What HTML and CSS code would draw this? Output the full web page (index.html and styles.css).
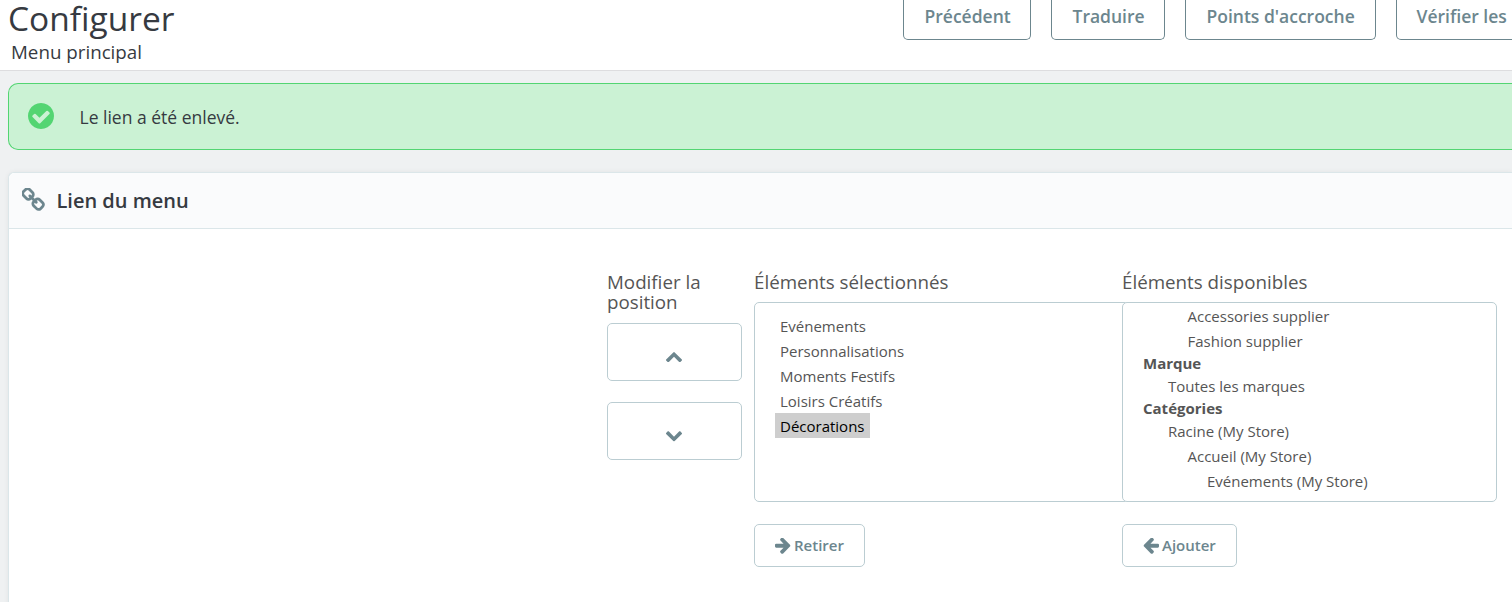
FILE: index.html
```
<!DOCTYPE html>
<html lang="fr">
<head>
    <meta charset="UTF-8">
    <meta name="viewport" content="width=device-width, initial-scale=1.0">
    <title>Configurer - Menu principal</title>
    <link rel="stylesheet" href="styles.css">
</head>
<body>
    <header class="page-head">
        <div class="page-titles">
            <h1 class="page-title">Configurer</h1>
            <div class="page-subtitle">Menu principal</div>
        </div>
        <div class="toolbar">
            <a class="toolbar-btn btn-back">Précédent</a>
            <a class="toolbar-btn btn-translate">Traduire</a>
            <a class="toolbar-btn btn-hooks">Points d'accroche</a>
            <a class="toolbar-btn btn-check">Vérifier les</a>
        </div>
    </header>

    <main class="content">
        <div class="alert-success">
            <svg class="alert-icon" viewBox="128 128 1536 1536"><path d="M1412 734q0-28-18-46l-91-90q-19-19-45-19t-45 19l-408 407-226-226q-19-19-45-19t-45 19l-91 90q-18 18-18 46 0 27 18 45l362 362q19 19 45 19 27 0 46-19l543-543q18-18 18-45zm252 162q0 209-103 385.500t-279.500 279.500-385.500 103-385.500-103-279.500-279.500-103-385.500 103-385.500 279.500-279.500 385.500-103 385.500 103 279.500 279.500 103 385.500z"/></svg>
            <span>Le lien a été enlevé.</span>
        </div>

        <section class="panel">
            <div class="panel-heading">
                <svg class="link-icon" viewBox="64 64 1664 1664"><path d="M1456 1216q0-40-28-68l-208-208q-28-28-68-28-42 0-72 32 3 3 19 18.500t21.500 21.500 15 19 13 25.500 3.500 27.500q0 40-28 68t-68 28q-15 0-27.500-3.500t-25.500-13-19-15-21.500-21.500-18.500-19q-33 31-33 73 0 40 28 68l206 207q27 27 68 27 40 0 68-26l147-146q28-28 28-67zm-703-705q0-40-28-68l-206-207q-28-28-68-28-39 0-68 27l-147 146q-28 28-28 67 0 40 28 68l208 208q27 27 68 27 42 0 72-31-3-3-19-18.500t-21.500-21.500-15-19-13-25.500-3.500-27.500q0-40 28-68t68-28q15 0 27.500 3.500t25.500 13 19 15 21.500 21.500 18.500 19q33-31 33-73zm895 705q0 120-85 203l-147 146q-83 83-203 83-121 0-204-85l-206-207q-83-83-83-203 0-123 88-209l-88-88q-86 88-208 88-120 0-204-84l-208-208q-84-84-84-204t85-203l147-146q83-83 203-83 121 0 204 85l206 207q83 83 83 203 0 123-88 209l88 88q86-88 208-88 120 0 204 84l208 208q84 84 84 204z"/></svg>
                <h3 class="panel-title">Lien du menu</h3>
            </div>

            <div class="panel-body">
                <div class="col-position">
                    <h4>Modifier la position</h4>
                    <button class="btn btn-move" aria-label="Monter">
                        <svg viewBox="96 480 1600 1050"><path d="M1683 1331l-166 165q-19 19-45 19t-45-19l-531-531-531 531q-19 19-45 19t-45-19l-166-165q-19-19-19-45.500t19-45.500l742-741q19-19 45-19t45 19l742 741q19 19 19 45.500t-19 45.500z"/></svg>
                    </button>
                    <button class="btn btn-move" aria-label="Descendre">
                        <svg class="flip-v" viewBox="96 480 1600 1050"><path d="M1683 1331l-166 165q-19 19-45 19t-45-19l-531-531-531 531q-19 19-45 19t-45-19l-166-165q-19-19-19-45.500t19-45.500l742-741q19-19 45-19t45 19l742 741q19 19 19 45.500t-19 45.500z"/></svg>
                    </button>
                </div>

                <div class="col-selected">
                    <h4>Éléments sélectionnés</h4>
                    <ul class="list list-selected">
                        <li>Evénements</li>
                        <li>Personnalisations</li>
                        <li>Moments Festifs</li>
                        <li>Loisirs Créatifs</li>
                        <li class="selected">Décorations</li>
                    </ul>
                    <button class="btn btn-remove">
                        <svg class="arrow" viewBox="128 224 1536 1536"><path d="M1600 960q0 54-37 91l-651 651q-39 37-91 37-51 0-90-37l-75-75q-38-38-38-91t38-91l293-293h-704q-52 0-84.500-37.500t-32.500-90.500v-128q0-53 32.500-90.500t84.500-37.500h704l-293-294q-38-36-38-90t38-90l75-75q38-38 90-38 53 0 91 38l651 651q37 35 37 90z"/></svg>
                        Retirer
                    </button>
                </div>

                <div class="col-available">
                    <h4>Éléments disponibles</h4>
                    <ul class="list list-available">
                        <li class="level-2">Accessories supplier</li>
                        <li class="level-2">Fashion supplier</li>
                        <li class="group">Marque</li>
                        <li class="level-1">Toutes les marques</li>
                        <li class="group">Catégories</li>
                        <li class="level-1">Racine (My Store)</li>
                        <li class="level-2">Accueil (My Store)</li>
                        <li class="level-3">Evénements (My Store)</li>
                    </ul>
                    <button class="btn btn-add">
                        <svg class="arrow flip-h" viewBox="128 224 1536 1536"><path d="M1600 960q0 54-37 91l-651 651q-39 37-91 37-51 0-90-37l-75-75q-38-38-38-91t38-91l293-293h-704q-52 0-84.500-37.500t-32.500-90.500v-128q0-53 32.500-90.500t84.500-37.500h704l-293-294q-38-36-38-90t38-90l75-75q38-38 90-38 53 0 91 38l651 651q37 35 37 90z"/></svg>
                        Ajouter
                    </button>
                </div>
            </div>
        </section>
    </main>
</body>
</html>
```

FILE: styles.css
```
* {
    box-sizing: border-box;
}

body {
    margin: 0;
    height: 602px;
    overflow: hidden;
    font-family: "Open Sans", sans-serif;
    font-size: 15px;
    color: #555;
    background: #eff1f2;
}

h1, h3, h4, ul {
    margin: 0;
    padding: 0;
    font-weight: 400;
}

/* Header */
.page-head {
    display: flex;
    justify-content: space-between;
    height: 71px;
    background: #fff;
    border-bottom: 1px solid #dddddf;
    color: #363a41;
}

.page-titles {
    padding-left: 8px;
}

.page-title {
    font-size: 33.5px;
    line-height: 36px;
}

.page-subtitle {
    padding-left: 3px;
    font-size: 18.75px;
    line-height: 32px;
}

.toolbar {
    display: flex;
    gap: 20px;
    width: 609px;
    overflow: hidden;
}

.toolbar-btn {
    flex: none;
    height: 40px;
    padding-left: 20.5px;
    border: 1px solid #6c868e;
    border-top: 0;
    border-radius: 0 0 5px 5px;
    font-size: 17.5px;
    font-weight: 600;
    line-height: 33px;
    color: #6c868e;
    white-space: nowrap;
}

.btn-back {
    width: 128px;
}

.btn-translate {
    width: 114px;
}

.btn-hooks {
    width: 191px;
}

.btn-check {
    width: 160px;
    padding-left: 19.5px;
}

/* Content */
.content {
    padding: 12px 0 0 8px;
}

.alert-success {
    display: flex;
    align-items: center;
    gap: 25.5px;
    height: 67px;
    margin-bottom: 22px;
    padding-left: 19px;
    border: 1px solid #53d572;
    border-right: 0;
    border-radius: 10px 0 0 10px;
    background: #cbf2d4;
    font-size: 17.5px;
    color: #363a41;
}

.alert-icon {
    width: 26px;
    height: 26px;
    margin-bottom: 1px;
    fill: #53d572;
}

.panel {
    height: 440px;
    border: 1px solid #dbe6e9;
    border-right: 0;
    border-radius: 6px 0 0 0;
    background: #fff;
    box-shadow: 0 0 5px rgba(0, 0, 0, 0.06);
}

.panel-heading {
    display: flex;
    align-items: center;
    gap: 10.5px;
    height: 56px;
    padding-left: 13px;
    border-bottom: 1px solid #dbe6e9;
    border-radius: 6px 0 0 0;
    background: #fafbfc;
}

.link-icon {
    width: 24px;
    height: 24px;
    margin-bottom: 2px;
    fill: #6c868e;
}

.panel-title {
    font-size: 20px;
    font-weight: 600;
    color: #363a41;
}

.panel-body {
    display: grid;
    grid-template-columns: 135px 368px 375px;
    padding: 43px 0 0 598px;
}

.col-selected,
.col-available {
    width: 387px;
    padding-left: 12px;
}

h4 {
    margin-bottom: 10px;
    font-size: 18.75px;
    line-height: 20px;
}

.col-position h4 {
    margin-bottom: 11px;
}

/* Buttons */
.btn {
    display: flex;
    align-items: center;
    border: 1px solid #bbcdd2;
    border-radius: 5px;
    background: #fff;
    font: 600 15px "Open Sans", sans-serif;
    color: #6c868e;
}

.btn svg {
    fill: #6c868e;
}

.btn-move {
    justify-content: center;
    width: 135px;
    height: 58px;
    margin-bottom: 21px;
    padding: 10px 1px 0 0;
}

.btn-move svg {
    width: 16px;
    height: 10.5px;
}

.btn-remove,
.btn-add {
    gap: 3px;
    width: 111px;
    height: 43px;
    padding: 0 0 2px 20px;
}

.btn-add {
    width: 115px;
}

.arrow {
    width: 16px;
    height: 16px;
    margin-top: 2px;
}

.flip-h {
    transform: scaleX(-1);
}

.flip-v {
    transform: scaleY(-1);
}

/* Lists */
.list {
    height: 200px;
    margin-bottom: 22px;
    border: 1px solid #bbcdd2;
    border-radius: 5px;
    background: #fff;
    list-style: none;
    line-height: 25px;
}

.list-selected {
    padding: 10px 20px;
}

.list-selected li {
    width: fit-content;
    padding: 2px 5px 0;
    line-height: 23px;
}

.list-selected .selected {
    background: #cecece;
    color: #000;
}

.list-available {
    padding: 1px 20px;
}

.list-available .group {
    padding-bottom: 2px;
    font-weight: 700;
    line-height: 18px;
}

.level-1 {
    padding-left: 25px;
}

.level-2 {
    padding-left: 44.5px;
}

.level-3 {
    padding-left: 64px;
}
```
